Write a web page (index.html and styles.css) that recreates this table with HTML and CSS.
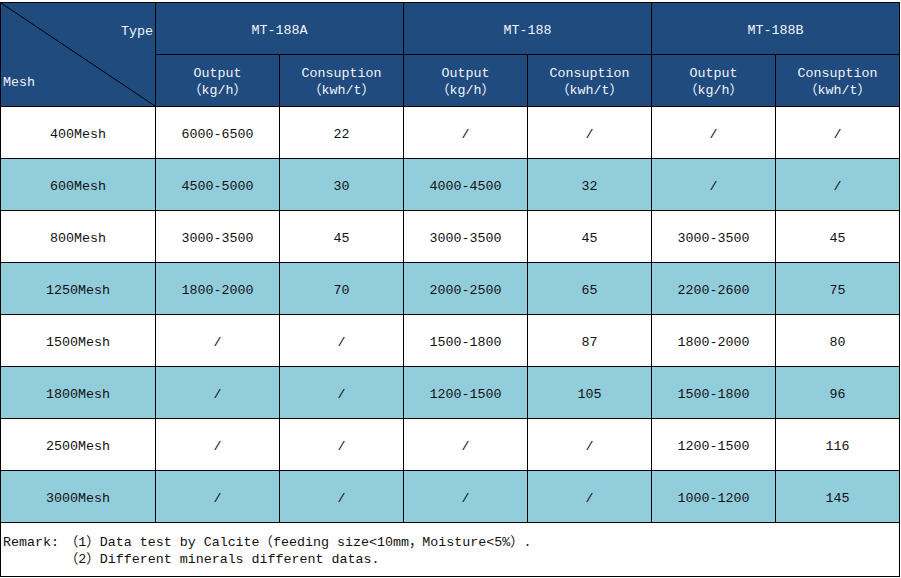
FILE: index.html
```html
<!DOCTYPE html>
<html>
<head>
<meta charset="utf-8">
<link rel="stylesheet" href="styles.css">
</head>
<body>
<table class="spec">
  <colgroup>
    <col class="c-first">
    <col class="c"><col class="c"><col class="c"><col class="c"><col class="c"><col class="c">
  </colgroup>
  <tr class="hrow">
    <th class="corner" rowspan="2">
      <svg class="diag" viewBox="0 0 154 104" preserveAspectRatio="none"><line x1="0" y1="0" x2="154" y2="104" stroke="#000" stroke-width="1"/></svg>
      <div class="corner-in">
        <div class="type">Type</div>
        <div class="mesh">Mesh</div>
      </div>
    </th>
    <th colspan="2">MT-188A</th>
    <th colspan="2">MT-188</th>
    <th colspan="2">MT-188B</th>
  </tr>
  <tr class="hrow">
    <th>Output<br>（kg/h）</th>
    <th>Consuption<br>（kwh/t）</th>
    <th>Output<br>（kg/h）</th>
    <th>Consuption<br>（kwh/t）</th>
    <th>Output<br>（kg/h）</th>
    <th>Consuption<br>（kwh/t）</th>
  </tr>
  <tr class="row"><td>400Mesh</td><td>6000-6500</td><td>22</td><td>/</td><td>/</td><td>/</td><td>/</td></tr>
  <tr class="row alt"><td>600Mesh</td><td>4500-5000</td><td>30</td><td>4000-4500</td><td>32</td><td>/</td><td>/</td></tr>
  <tr class="row"><td>800Mesh</td><td>3000-3500</td><td>45</td><td>3000-3500</td><td>45</td><td>3000-3500</td><td>45</td></tr>
  <tr class="row alt"><td>1250Mesh</td><td>1800-2000</td><td>70</td><td>2000-2500</td><td>65</td><td>2200-2600</td><td>75</td></tr>
  <tr class="row"><td>1500Mesh</td><td>/</td><td>/</td><td>1500-1800</td><td>87</td><td>1800-2000</td><td>80</td></tr>
  <tr class="row alt"><td>1800Mesh</td><td>/</td><td>/</td><td>1200-1500</td><td>105</td><td>1500-1800</td><td>96</td></tr>
  <tr class="row"><td>2500Mesh</td><td>/</td><td>/</td><td>/</td><td>/</td><td>1200-1500</td><td>116</td></tr>
  <tr class="row alt"><td>3000Mesh</td><td>/</td><td>/</td><td>/</td><td>/</td><td>1000-1200</td><td>145</td></tr>
  <tr class="remark-row">
    <td colspan="7" class="remark">
      <div class="rm-line"><span class="rm-label">Remark:</span><span>（1）Data test by Calcite（feeding size&lt;10mm，Moisture&lt;5%）.</span></div>
      <div class="rm-line"><span class="rm-label"></span><span>（2）Different minerals different datas.</span></div>
    </td>
  </tr>
</table>
</body>
</html>
```
FILE: styles.css
```css
html, body {
  margin: 0;
  padding: 0;
  background: #fff;
}
body {
  padding: 2px 0 0 0;
  font-family: "Liberation Mono", "Noto Sans CJK SC", monospace;
  font-size: 13.33px;
  color: #111;
}
.spec {
  border-collapse: collapse;
  table-layout: fixed;
  width: 900px;
}
.c-first { width: 155px; }
.c { width: 124px; }
.spec th, .spec td {
  border: 1px solid #000;
  padding: 3px 0 0 0;
  text-align: center;
  vertical-align: middle;
  font-weight: normal;
  line-height: 17px;
}
.hrow th {
  background: #1f4b7f;
  color: #f2f4f8;
  height: 48px;
}
.row td {
  height: 48px;
  background: #fff;
}
.row.alt td {
  background: #92cddc;
}
.corner {
  position: relative;
}
.spec th.corner {
  padding: 0;
}
.diag {
  position: absolute;
  left: 0;
  top: 0;
  width: 100%;
  height: 100%;
}
.corner-in {
  display: flex;
  flex-direction: column;
  height: 103px;
}
.type, .mesh {
  flex: 1;
  display: flex;
  align-items: center;
  padding: 5px 2px 0 2px;
}
.type { justify-content: flex-end; }
.mesh { justify-content: flex-start; }
.remark-row td {
  height: 50px;
  text-align: left;
  background: #fff;
}
.rm-line {
  display: flex;
  white-space: pre;
  padding-left: 2px;
}
.rm-label {
  width: 62px;
}
```
